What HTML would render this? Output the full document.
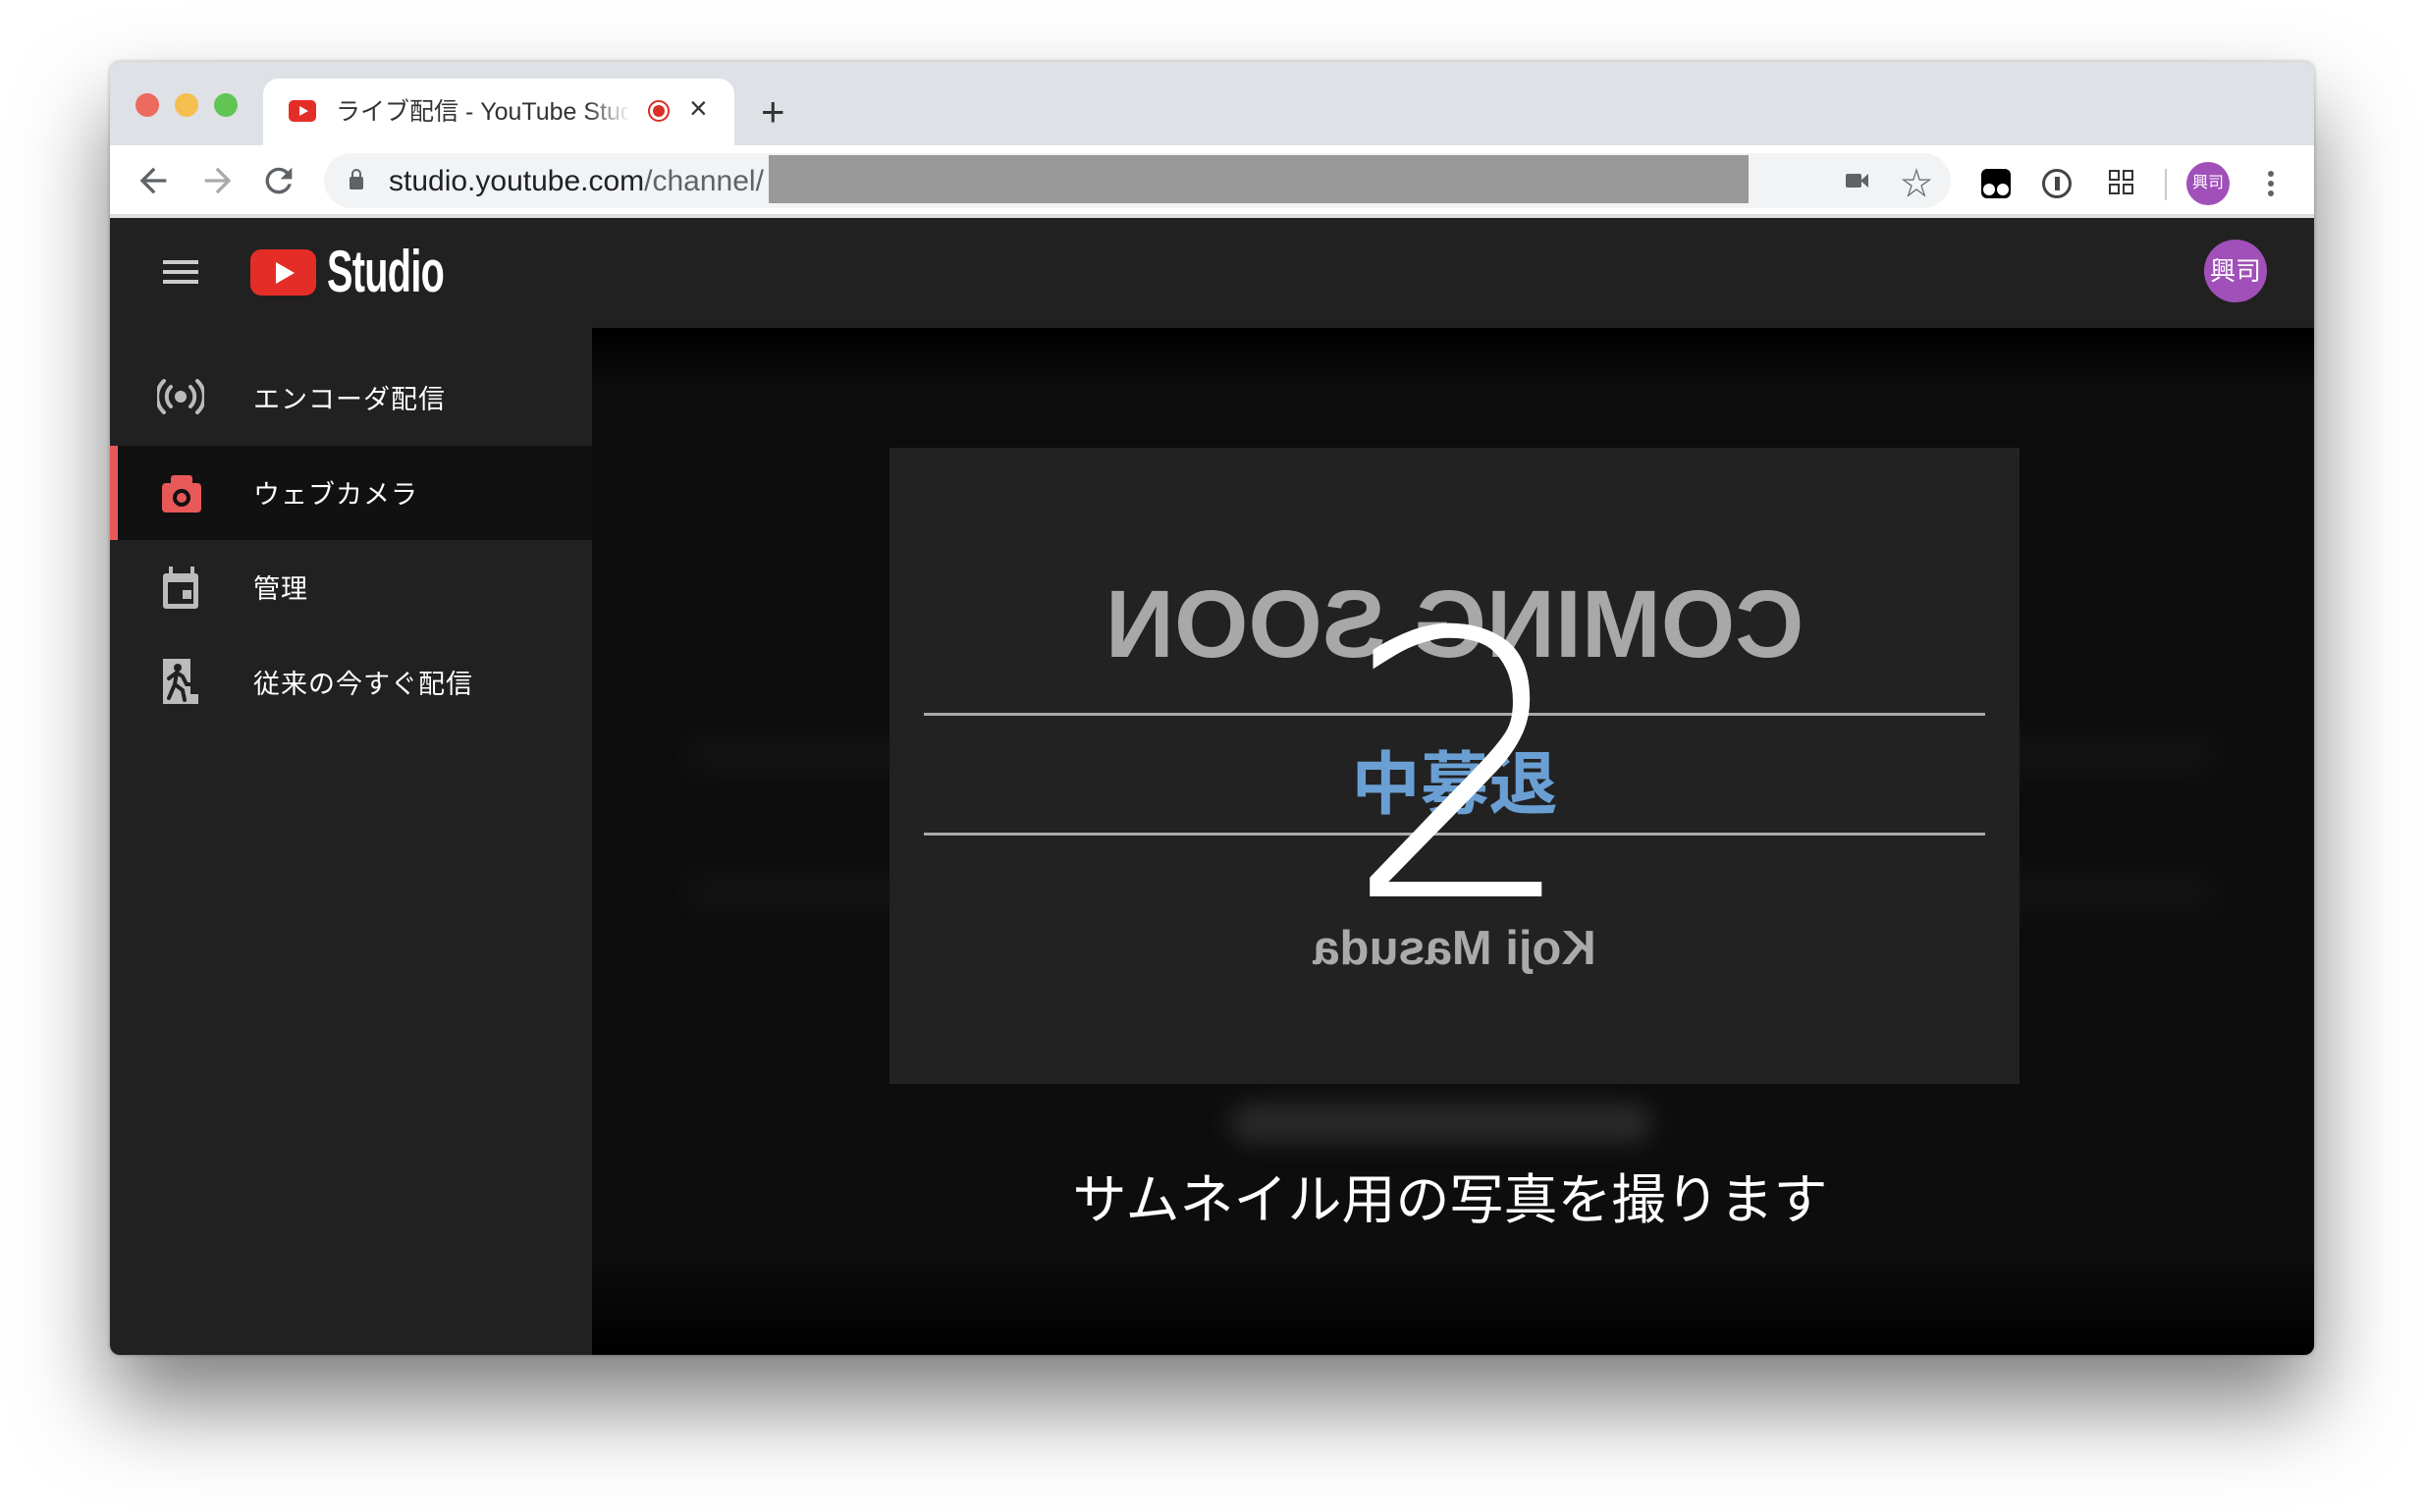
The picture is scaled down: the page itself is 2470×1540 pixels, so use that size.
<!DOCTYPE html>
<html><head><meta charset="utf-8">
<style>
*{margin:0;padding:0;box-sizing:border-box}
body{width:2470px;height:1540px;background:#fff;position:relative;overflow:hidden;font-family:"Liberation Sans","Noto Sans CJK JP",sans-serif}
.win{position:absolute;left:112px;top:63px;width:2245px;height:1317px;border-radius:10px;overflow:hidden;background:#dee1e6;box-shadow:0 50px 90px rgba(0,0,0,.5),0 0 4px rgba(0,0,0,.3)}
.a{position:absolute}
.dot{position:absolute;width:24px;height:24px;border-radius:50%;top:32px}
.tab{left:156px;top:17px;width:480px;height:70px;background:#fff;border-radius:16px 16px 0 0}
.toolbar{left:0;top:85px;width:100%;height:72px;background:#fff;border-bottom:2px solid #dadce0}
.pill{left:218px;top:8px;width:1657px;height:56px;border-radius:28px;background:#f1f3f4}
.app{left:0;top:159px;width:100%;height:1158px;background:#212121}
.side-t{position:absolute;left:146px;color:#fff;font-size:27px;letter-spacing:1px}
</style></head><body>
<div class="win">
  <div class="dot" style="left:26px;background:#ed6a5e"></div>
  <div class="dot" style="left:66px;background:#f5bf4f"></div>
  <div class="dot" style="left:106px;background:#61c554"></div>
  <div class="a tab">
    <div class="a" style="left:26px;top:22px;width:28px;height:22px;background:#e52d27;border-radius:5px"></div>
    <div class="a" style="left:37px;top:28px;width:0;height:0;border-left:9px solid #fff;border-top:5px solid transparent;border-bottom:5px solid transparent"></div>
    <div class="a" style="left:74px;top:14px;font-size:25px;color:#333;white-space:nowrap;width:300px;overflow:hidden;-webkit-mask-image:linear-gradient(90deg,#000 85%,transparent)">ライブ配信 - YouTube Studio</div>
    <div class="a" style="left:392px;top:22px;width:22px;height:22px;border-radius:50%;border:2px solid #d93025"><div class="a" style="left:3px;top:3px;width:12px;height:12px;border-radius:50%;background:#d93025"></div></div>
    <div class="a" style="left:434px;top:12px;font-size:32px;color:#333">×</div>
  </div>
  <div class="a" style="left:663px;top:30px;font-size:42px;color:#333;line-height:42px">+</div>
  <div class="a toolbar">
    <svg class="a" style="left:24px;top:16px" width="40" height="40" viewBox="0 0 24 24"><path d="M20 11H7.8l5.6-5.6L12 4l-8 8 8 8 1.4-1.4L7.8 13H20z" fill="#5f6368"/></svg>
    <svg class="a" style="left:90px;top:16px" width="40" height="40" viewBox="0 0 24 24"><path d="M4 11h12.2l-5.6-5.6L12 4l8 8-8 8-1.4-1.4 5.6-5.6H4z" fill="#aaa"/></svg>
    <svg class="a" style="left:152px;top:16px" width="40" height="40" viewBox="0 0 24 24"><path d="M17.6 6.4A8 8 0 1 0 19.7 14h-2.1A6 6 0 1 1 12 6c1.7 0 3.1.7 4.2 1.8L13 11h7V4z" fill="#5f6368"/></svg>
    <div class="a pill">
      <div class="a" style="left:26px;top:24px;width:14px;height:13px;background:#5f6368;border-radius:2px"></div>
      <div class="a" style="left:28px;top:16px;width:10px;height:11px;border:2px solid #5f6368;border-radius:5px 5px 0 0"></div>
      <div class="a" style="left:66px;top:12px;font-size:30px;color:#202124;white-space:nowrap">studio.youtube.com<span style="color:#5f6368">/channel/</span></div>
      <div class="a" style="left:453px;top:2px;width:998px;height:49px;background:#999"></div>
      <div class="a" style="left:1550px;top:21px;width:16px;height:14px;background:#5f6368;border-radius:2px"></div>
      <div class="a" style="left:1565px;top:21px;width:0;height:0;border-right:8px solid #5f6368;border-top:7px solid transparent;border-bottom:7px solid transparent"></div>
      <div class="a" style="left:1606px;top:6px;font-size:32px;color:#5f6368">☆</div>
    </div>
    <div class="a" style="left:1906px;top:24px;width:30px;height:30px;background:#000;border-radius:6px"><div class="a" style="left:2px;top:15px;width:12px;height:12px;background:#fff;border-radius:50%"></div><div class="a" style="left:16px;top:15px;width:12px;height:12px;background:#fff;border-radius:50%"></div></div>
    <div class="a" style="left:1968px;top:24px;width:30px;height:30px;border:3px solid #444;border-radius:50%"><div class="a" style="left:10px;top:5px;width:5px;height:14px;background:#444"></div></div>
    <div class="a" style="left:2036px;top:25px;width:11px;height:11px;border:2px solid #333"></div><div class="a" style="left:2050px;top:25px;width:11px;height:11px;border:2px solid #333"></div>
    <div class="a" style="left:2036px;top:39px;width:11px;height:11px;border:2px solid #333"></div><div class="a" style="left:2050px;top:39px;width:11px;height:11px;border:2px solid #333"></div>
    <div class="a" style="left:2093px;top:24px;width:2px;height:32px;background:#ccc"></div>
    <div class="a" style="left:2115px;top:17px;width:44px;height:44px;border-radius:50%;background:#a050b8;color:#fff;font-size:16px;text-align:center;line-height:44px">興司</div>
    <div class="a" style="left:2198px;top:26px;width:6px;height:6px;border-radius:50%;background:#5f6368;box-shadow:0 10px 0 #5f6368,0 20px 0 #5f6368"></div>
  </div>
  <div class="a app">
    <div class="a" style="left:54px;top:43px;width:36px;height:4px;background:#ccc;box-shadow:0 10px 0 #ccc,0 20px 0 #ccc"></div>
    <div class="a" style="left:143px;top:32px;width:67px;height:47px;background:#e52d27;border-radius:11px"></div>
    <div class="a" style="left:169px;top:45px;width:0;height:0;border-left:19px solid #fff;border-top:11px solid transparent;border-bottom:11px solid transparent"></div>
    <div class="a" style="left:221px;top:22px;font-family:'Liberation Sans Narrow','Liberation Sans',sans-serif;font-weight:bold;font-size:60px;line-height:66px;color:#fff;letter-spacing:-1px;transform:scaleX(.66);transform-origin:left">Studio</div>
    <div class="a" style="left:2133px;top:22px;width:64px;height:64px;border-radius:50%;background:#a050b8;color:#fff;font-size:26px;text-align:center;line-height:64px">興司</div>
    <!-- sidebar -->
    <div class="a" style="left:0;top:232px;width:491px;height:96px;background:#111"></div>
    <div class="a" style="left:0;top:232px;width:8px;height:96px;background:#e95858"></div>
    <svg class="a" style="left:48px;top:164px" width="48" height="36" viewBox="0 0 48 36"><circle cx="24" cy="18" r="6" fill="#bbb"/><path d="M14 8a14 14 0 0 0 0 20M34 8a14 14 0 0 1 0 20M7 2a22 22 0 0 0 0 32M41 2a22 22 0 0 1 0 32" stroke="#bbb" stroke-width="4" fill="none" stroke-linecap="round"/></svg>
    <div class="side-t" style="top:163px">エンコーダ配信</div>
    <div class="a" style="left:53px;top:270px;width:40px;height:30px;background:#e95858;border-radius:4px"></div>
    <div class="a" style="left:62px;top:262px;width:22px;height:10px;background:#e95858;border-radius:3px 3px 0 0"></div>
    <div class="a" style="left:64px;top:276px;width:18px;height:18px;border:4px solid #111;border-radius:50%"></div>
    <div class="side-t" style="top:260px">ウェブカメラ</div>
    <div class="a" style="left:54px;top:362px;width:36px;height:36px;border:5px solid #bbb;border-top-width:9px;border-radius:3px"></div>
    <div class="a" style="left:74px;top:379px;width:9px;height:9px;background:#bbb"></div>
    <div class="a" style="left:60px;top:355px;width:4px;height:8px;background:#bbb;box-shadow:22px 0 0 #bbb"></div>
    <div class="side-t" style="top:356px">管理</div>
    <svg class="a" style="left:54px;top:449px" width="38" height="48" viewBox="0 0 38 48"><rect x="0" y="0" width="28" height="44" fill="#bbb"/><rect x="0" y="36" width="36" height="10" fill="#bbb"/><circle cx="15" cy="9" r="4" fill="#212121"/><path d="M6 20l8-6 6 4 4 8h6M14 14l-2 12 8 6 2 10M12 26l-6 14" stroke="#212121" stroke-width="4" fill="none" stroke-linecap="round"/></svg>
    <div class="side-t" style="top:453px">従来の今すぐ配信</div>
    <!-- content -->
    <div class="a" style="left:491px;top:112px;width:1754px;height:1046px;background:linear-gradient(#000 0,#0d0d0d 60px,#0d0d0d 940px,#000 1046px)">
      <div class="a" style="left:100px;top:420px;width:1550px;height:30px;background:#151515;filter:blur(14px)"></div>
      <div class="a" style="left:100px;top:560px;width:1550px;height:30px;background:#151515;filter:blur(14px)"></div>
      <div class="a" style="left:303px;top:122px;width:1151px;height:648px;background:#222">
        <div class="a" style="left:0;top:124px;width:1151px;text-align:center;font-size:97px;font-weight:bold;color:#a8a8a8;transform:scaleX(-1);white-space:nowrap">COMING SOON</div>
        <div class="a" style="left:35px;top:270px;width:1081px;height:3px;background:#aaa"></div>
        <div class="a" style="left:35px;top:392px;width:1081px;height:3px;background:#aaa"></div>
        <div class="a" style="left:0;top:287px;width:1151px;text-align:center;font-size:70px;font-weight:bold;color:#6a9fd4;white-space:nowrap;padding-left:0">中募退</div>
        <div class="a" style="left:0;top:482px;width:1151px;text-align:center;font-size:49px;font-weight:bold;color:#aaa;transform:scaleX(-1);white-space:nowrap">Koji Masuda</div>
        <div class="a" style="left:0;top:128px;width:1151px;text-align:center;font-family:'DejaVu Sans',sans-serif;font-weight:200;font-size:375px;line-height:400px;color:#fff;padding-left:14px">2</div>
      </div>
      <div class="a" style="left:650px;top:790px;width:430px;height:40px;background:#2a2a2a;filter:blur(12px);border-radius:20px"></div>
      <div class="a" style="left:0;top:843px;width:1754px;text-align:center;font-size:55px;color:#fff;white-space:nowrap;padding-right:6px">サムネイル用の写真を撮ります</div>
    </div>
  </div>
</div>
</body></html>
